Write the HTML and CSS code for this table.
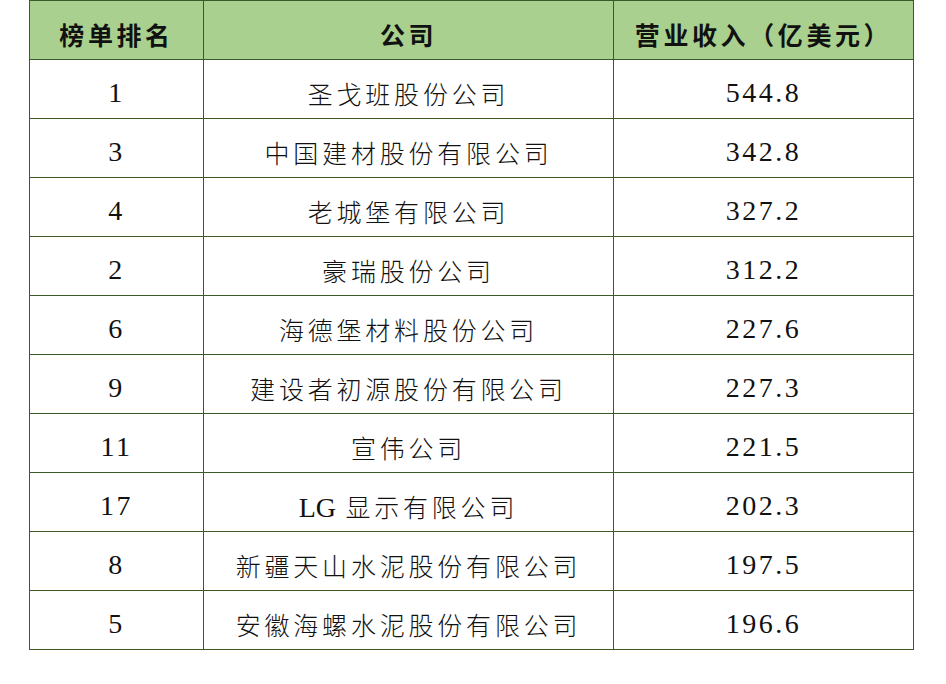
FILE: index.html
```html
<!DOCTYPE html>
<html lang="zh-CN">
<head>
<meta charset="utf-8">
<title>营业收入排名</title>
<link rel="stylesheet" href="styles.css">
</head>
<body>
<table class="rank">
  <colgroup><col class="c1"><col class="c2"><col class="c3"></colgroup>
  <thead>
    <tr><th>榜单排名</th><th>公司</th><th>营业收入（亿美元）</th></tr>
  </thead>
  <tbody>
    <tr><td class="num">1</td><td class="name">圣戈班股份公司</td><td class="num">544.8</td></tr>
    <tr><td class="num">3</td><td class="name">中国建材股份有限公司</td><td class="num">342.8</td></tr>
    <tr><td class="num">4</td><td class="name">老城堡有限公司</td><td class="num">327.2</td></tr>
    <tr><td class="num">2</td><td class="name">豪瑞股份公司</td><td class="num">312.2</td></tr>
    <tr><td class="num">6</td><td class="name">海德堡材料股份公司</td><td class="num">227.6</td></tr>
    <tr><td class="num">9</td><td class="name">建设者初源股份有限公司</td><td class="num">227.3</td></tr>
    <tr><td class="num">11</td><td class="name">宣伟公司</td><td class="num">221.5</td></tr>
    <tr><td class="num">17</td><td class="name"><span class="latin">LG</span> 显示有限公司</td><td class="num">202.3</td></tr>
    <tr><td class="num">8</td><td class="name">新疆天山水泥股份有限公司</td><td class="num">197.5</td></tr>
    <tr><td class="num">5</td><td class="name">安徽海螺水泥股份有限公司</td><td class="num">196.6</td></tr>
  </tbody>
</table>
</body>
</html>
```
FILE: styles.css
```css
html, body {
  margin: 0;
  padding: 0;
  background: #ffffff;
}
.rank {
  margin-left: 29px;
  border-collapse: collapse;
  table-layout: fixed;
  width: 884px;
  color: #111111;
}
.c1 { width: 174px; }
.c2 { width: 410px; }
.c3 { width: 300px; }
.rank th, .rank td {
  border: 1px solid #3b5a28;
  height: 59px;
  padding: 7px 0 0 0;
  box-sizing: border-box;
  text-align: center;
  vertical-align: middle;
  white-space: nowrap;
}
.rank th {
  background: #a9d08e;
  font-family: "Noto Sans CJK SC", sans-serif;
  font-weight: 700;
  font-size: 25px;
  letter-spacing: 3.6px;
}
.rank td.name {
  font-family: "Noto Sans CJK SC", sans-serif;
  font-weight: 300;
  font-size: 25px;
  letter-spacing: 3.8px;
}
.rank td.num {
  font-family: "Liberation Serif", "Noto Sans CJK SC", serif;
  font-size: 28px;
  letter-spacing: 2.5px;
  font-weight: 400;
}
.latin {
  font-family: "Liberation Serif", serif;
  font-size: 28px;
  letter-spacing: 0;
}
```
